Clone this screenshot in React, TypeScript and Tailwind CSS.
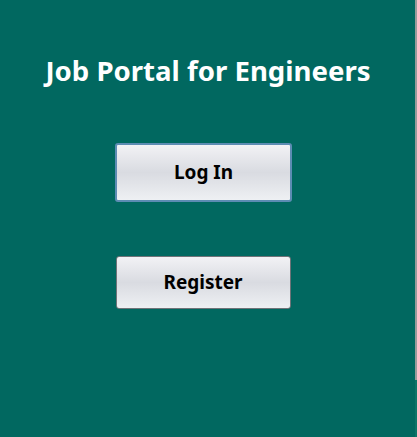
export default function App() {
  const btn =
    "flex items-center justify-center rounded-[3px] bg-gradient-to-b from-[#f2f2f5] via-[#d9dbe1] to-[#eef0f3] text-black font-bold";

  return (
    <div className="flex h-[437px] w-[417px] bg-[#016860]" style={{ fontFamily: "'Noto Sans', 'DejaVu Sans', sans-serif" }}>
      <main className="flex flex-1 flex-col items-center">
        <h1 className="mt-[52px] ml-[1px] text-[27.6px] leading-[36px] font-bold text-white">
          Job Portal for Engineers
        </h1>

        <button className={`${btn} mt-[55px] ml-[-8px] h-[59px] w-[177px] border-2 border-[#5d8cb3] text-[19px]`}>
          Log In
        </button>

        <button className={`${btn} mt-[54px] ml-[-9px] h-[53px] w-[175px] border border-[#6f7378] text-[19px]`}>
          Register
        </button>
      </main>

      <div className="flex w-[2px] flex-col">
        <div className="h-[380px] bg-[#9a9a9a]" />
        <div className="flex-1 bg-[#0c7468]" />
      </div>
    </div>
  );
}
